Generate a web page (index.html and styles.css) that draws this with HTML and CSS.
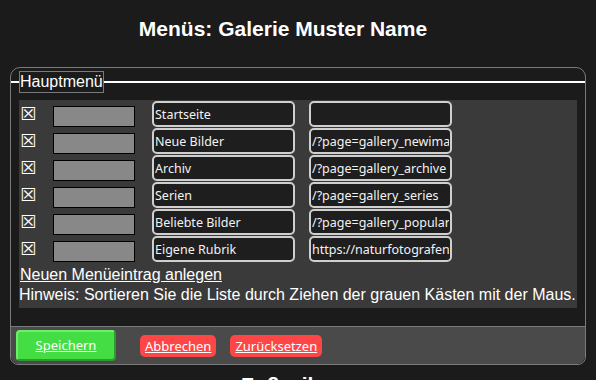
FILE: index.html
```html
<!DOCTYPE html>
<html lang="de">
<head>
    <meta charset="UTF-8">
    <meta name="viewport" content="width=device-width, initial-scale=1.0">
    <title>Menüs: Galerie Muster Name</title>
    <link rel="stylesheet" href="styles.css">
</head>
<body>
    <h1 class="page-title">Menüs: Galerie Muster Name</h1>

    <div class="panel">
        <fieldset class="menu-group">
            <legend>Hauptmenü</legend>
            <div class="entries">
                <div class="entry">
                    <span class="check">☒</span>
                    <span class="handle"></span>
                    <input class="field" type="text" value="Startseite">
                    <input class="field" type="text" value="">
                </div>
                <div class="entry">
                    <span class="check">☒</span>
                    <span class="handle"></span>
                    <input class="field" type="text" value="Neue Bilder">
                    <input class="field" type="text" value="/?page=gallery_newimages">
                </div>
                <div class="entry">
                    <span class="check">☒</span>
                    <span class="handle"></span>
                    <input class="field" type="text" value="Archiv">
                    <input class="field" type="text" value="/?page=gallery_archive">
                </div>
                <div class="entry">
                    <span class="check">☒</span>
                    <span class="handle"></span>
                    <input class="field" type="text" value="Serien">
                    <input class="field" type="text" value="/?page=gallery_series">
                </div>
                <div class="entry">
                    <span class="check">☒</span>
                    <span class="handle"></span>
                    <input class="field" type="text" value="Beliebte Bilder">
                    <input class="field" type="text" value="/?page=gallery_popular">
                </div>
                <div class="entry">
                    <span class="check">☒</span>
                    <span class="handle"></span>
                    <input class="field" type="text" value="Eigene Rubrik">
                    <input class="field" type="text" value="https://naturfotografen-forum.de/">
                </div>
                <a class="add-entry" href="#">Neuen Menüeintrag anlegen</a>
                <p class="hint">Hinweis: Sortieren Sie die Liste durch Ziehen der grauen Kästen mit der Maus.</p>
            </div>
        </fieldset>

        <div class="actions">
            <a class="btn btn-save" href="#">Speichern</a>
            <a class="btn btn-cancel" href="#">Abbrechen</a>
            <a class="btn btn-cancel" href="#">Zurücksetzen</a>
        </div>
    </div>

    <h2 class="page-title next-title">Fußzeile</h2>
</body>
</html>
```

FILE: styles.css
```css
body {
    margin: 0;
    background: #1b1b1b;
    color: #fff;
    font-family: "Liberation Sans", Arial, sans-serif;
    font-size: 16px;
    overflow: hidden;
}

.page-title {
    margin: 17px 0 26px;
    padding-right: 30px;
    text-align: center;
    font-size: 21px;
    line-height: 24px;
    font-weight: bold;
}

.next-title {
    margin-top: 8px;
}

/* Rahmen um das Menü */
.panel {
    margin: 0 10px;
    padding-top: 3px;
    border: 1px solid #7a7a7a;
    border-radius: 10px 10px 8px 8px;
}

.menu-group {
    margin: 0;
    padding: 7px 8px 18px;
    border: 0;
    border-top: 2px solid #fff;
    min-width: 0;
}

.menu-group legend {
    padding: 0;
    border: 1px solid #7a7a7a;
    line-height: 20px;
    font-size: 16px;
}

.entries {
    background: #3a3a3a;
    padding: 1px 0 3px;
}

.entry {
    display: flex;
    align-items: flex-end;
    margin-bottom: 1px;
}

.check {
    align-self: center;
    width: 33px;
    padding-left: 1px;
    font-family: "DejaVu Sans", sans-serif;
    font-size: 18px;
    line-height: 18px;
    font-weight: bold;
}

.handle {
    width: 82px;
    height: 21px;
    margin-right: 17px;
    box-sizing: border-box;
    border: 1px solid #000;
    background: #888;
    cursor: move;
}

.field {
    width: 143px;
    height: 26px;
    margin: 0 14px 0 0;
    padding: 0 1px;
    box-sizing: border-box;
    border: 2px solid #cfcfcf;
    border-radius: 5px;
    background: #1e1e1e;
    color: #f2f2f2;
    font-family: "Noto Sans", "Open Sans", sans-serif;
    font-size: 12.5px;
    outline: none;
}

.add-entry {
    display: block;
    margin: 3px 0 0 1px;
    line-height: 20px;
    color: #fff;
}

.hint {
    margin: 0;
    line-height: 20px;
}

/* Leiste mit den Knöpfen */
.actions {
    display: flex;
    align-items: center;
    padding: 3px 5px;
    border-top: 1px solid #7a7a7a;
    border-radius: 0 0 8px 8px;
    background: #4a4a4a;
}

.btn {
    color: #fff;
    font-family: "Noto Sans", "Open Sans", sans-serif;
    font-size: 13px;
    text-decoration: underline;
    text-align: center;
}

.btn-save {
    width: 100px;
    height: 31px;
    line-height: 27px;
    margin-right: 24px;
    box-sizing: border-box;
    border: 2px solid;
    border-color: #6cf06c #2c9c2c #2c9c2c #6cf06c;
    border-radius: 4px;
    background: #44dd44;
}

.btn-cancel {
    height: 22px;
    line-height: 22px;
    padding: 0 5px;
    margin-right: 14px;
    border-radius: 5px;
    background: #ff4646;
}
```
